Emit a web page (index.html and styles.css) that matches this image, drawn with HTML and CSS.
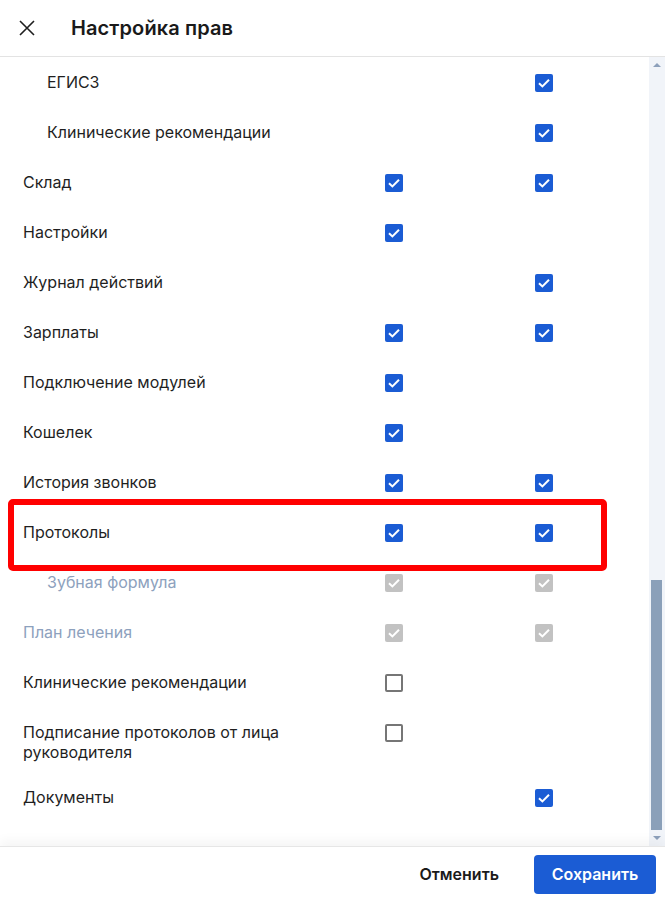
FILE: index.html
```html
<!DOCTYPE html>
<html lang="ru">
<head>
    <meta charset="UTF-8">
    <meta name="viewport" content="width=device-width, initial-scale=1.0">
    <title>Настройка прав</title>
    <link rel="stylesheet" href="styles.css">
</head>
<body>
    <div class="modal">
        <div class="modal-header">
            <button class="close-btn" aria-label="Закрыть">
                <svg width="16" height="16" viewBox="0 0 16 16"><path d="M1 1L15 15M15 1L1 15" stroke="#1f1f1f" stroke-width="1.6" fill="none"/></svg>
            </button>
            <h1>Настройка прав</h1>
        </div>

        <div class="modal-body">
            <div class="rights-list">
                <div class="row sub">
                    <span class="label">ЕГИСЗ</span>
                    <span class="cell"></span>
                    <span class="cell"><span class="check on"></span></span>
                </div>
                <div class="row sub">
                    <span class="label">Клинические рекомендации</span>
                    <span class="cell"></span>
                    <span class="cell"><span class="check on"></span></span>
                </div>
                <div class="row">
                    <span class="label">Склад</span>
                    <span class="cell"><span class="check on"></span></span>
                    <span class="cell"><span class="check on"></span></span>
                </div>
                <div class="row">
                    <span class="label">Настройки</span>
                    <span class="cell"><span class="check on"></span></span>
                    <span class="cell"></span>
                </div>
                <div class="row">
                    <span class="label">Журнал действий</span>
                    <span class="cell"></span>
                    <span class="cell"><span class="check on"></span></span>
                </div>
                <div class="row">
                    <span class="label">Зарплаты</span>
                    <span class="cell"><span class="check on"></span></span>
                    <span class="cell"><span class="check on"></span></span>
                </div>
                <div class="row">
                    <span class="label">Подключение модулей</span>
                    <span class="cell"><span class="check on"></span></span>
                    <span class="cell"></span>
                </div>
                <div class="row">
                    <span class="label">Кошелек</span>
                    <span class="cell"><span class="check on"></span></span>
                    <span class="cell"></span>
                </div>
                <div class="row">
                    <span class="label">История звонков</span>
                    <span class="cell"><span class="check on"></span></span>
                    <span class="cell"><span class="check on"></span></span>
                </div>
                <div class="row highlighted">
                    <span class="label">Протоколы</span>
                    <span class="cell"><span class="check on"></span></span>
                    <span class="cell"><span class="check on"></span></span>
                </div>
                <div class="row sub disabled">
                    <span class="label">Зубная формула</span>
                    <span class="cell"><span class="check on"></span></span>
                    <span class="cell"><span class="check on"></span></span>
                </div>
                <div class="row disabled">
                    <span class="label">План лечения</span>
                    <span class="cell"><span class="check on"></span></span>
                    <span class="cell"><span class="check on"></span></span>
                </div>
                <div class="row">
                    <span class="label">Клинические рекомендации</span>
                    <span class="cell"><span class="check"></span></span>
                    <span class="cell"></span>
                </div>
                <div class="row multi">
                    <span class="label">Подписание протоколов от лица руководителя</span>
                    <span class="cell"><span class="check"></span></span>
                    <span class="cell"></span>
                </div>
                <div class="row">
                    <span class="label">Документы</span>
                    <span class="cell"></span>
                    <span class="cell"><span class="check on"></span></span>
                </div>
            </div>

            <div class="scrollbar">
                <div class="arrow up"></div>
                <div class="track"><div class="thumb"></div></div>
                <div class="arrow down"></div>
            </div>
        </div>

        <div class="modal-footer">
            <button class="btn-cancel">Отменить</button>
            <button class="btn-save">Сохранить</button>
        </div>
    </div>
</body>
</html>
```

FILE: styles.css
```css
body {
    margin: 0;
    font-family: Inter, "Noto Sans", sans-serif;
    background-color: #fff;
    color: #1f1f1f;
}
.modal {
    height: 901px;
    display: flex;
    flex-direction: column;
}
.modal-header {
    height: 56px;
    border-bottom: 1px solid #e3e3e3;
    display: flex;
    align-items: center;
    box-sizing: content-box;
}
.close-btn {
    width: 16px;
    height: 16px;
    padding: 0;
    margin: 0 0 0 19px;
    border: none;
    background: none;
    display: flex;
    cursor: pointer;
}
.modal-header h1 {
    margin: 0 0 0 36px;
    font-size: 20px;
    font-weight: 600;
    color: #1a1a1a;
    letter-spacing: 0.1px;
}
.modal-body {
    flex: 1;
    display: flex;
    min-height: 0;
}
.rights-list {
    flex: 1;
    padding-bottom: 24px;
}
.row {
    display: grid;
    grid-template-columns: 1fr 150px 114px;
    padding: 15px 0 15px 23px;
    font-size: 16px;
    line-height: 20px;
    position: relative;
}
.row .label {
    padding-right: 20px;
}
.row.sub .label {
    padding-left: 24px;
}
.row.multi {
    padding-bottom: 10px;
}
.row.disabled .label {
    color: #8da1bd;
}
.cell {
    display: flex;
    align-items: flex-start;
    padding-top: 2px;
}
.check {
    width: 18px;
    height: 18px;
    box-sizing: border-box;
    border: 2px solid #767676;
    border-radius: 2px;
    display: block;
}
.check.on {
    border: none;
    background-color: #1b5cd4;
    background-image: url("data:image/svg+xml,%3Csvg xmlns='http://www.w3.org/2000/svg' width='18' height='18' viewBox='0 0 18 18'%3E%3Cpath d='M4 9.2L7.4 12.4L14 5.8' stroke='white' stroke-width='2' fill='none'/%3E%3C/svg%3E");
}
.row.disabled .check.on {
    background-color: #c2c2c2;
}
.row.highlighted::after {
    content: "";
    position: absolute;
    left: 8px;
    top: -8px;
    width: 599px;
    height: 72px;
    box-sizing: border-box;
    border: 6px solid #ff0000;
    border-radius: 5px;
}
.scrollbar {
    width: 16px;
    background-color: #f1f4f9;
    display: flex;
    flex-direction: column;
}
.arrow {
    height: 16px;
    display: flex;
    align-items: center;
    justify-content: center;
}
.arrow::before {
    content: "";
    border-left: 4px solid transparent;
    border-right: 4px solid transparent;
}
.arrow.up::before {
    border-bottom: 4px solid #8da0bb;
}
.arrow.down::before {
    border-top: 4px solid #8da0bb;
}
.track {
    flex: 1;
    display: flex;
    flex-direction: column;
    justify-content: flex-end;
}
.thumb {
    height: 250px;
    margin: 0 3px 0 2px;
    background-color: #8ba0b9;
}
.modal-footer {
    height: 54px;
    border-top: 1px solid #e6e6e6;
    box-shadow: 0 -6px 10px rgba(0, 0, 0, 0.04);
    display: flex;
    align-items: center;
    justify-content: flex-end;
    padding-right: 9px;
    gap: 16px;
}
.btn-cancel {
    font-family: Inter, "Noto Sans", sans-serif;
    font-size: 16px;
    font-weight: 600;
    color: #1a1a1a;
    background: none;
    border: none;
    padding: 0 19px;
    height: 39px;
    cursor: pointer;
}
.btn-save {
    font-family: Inter, "Noto Sans", sans-serif;
    font-size: 16px;
    font-weight: 600;
    color: #fff;
    background-color: #1b5cd4;
    border: none;
    border-radius: 4px;
    width: 122px;
    height: 39px;
    cursor: pointer;
}
```
